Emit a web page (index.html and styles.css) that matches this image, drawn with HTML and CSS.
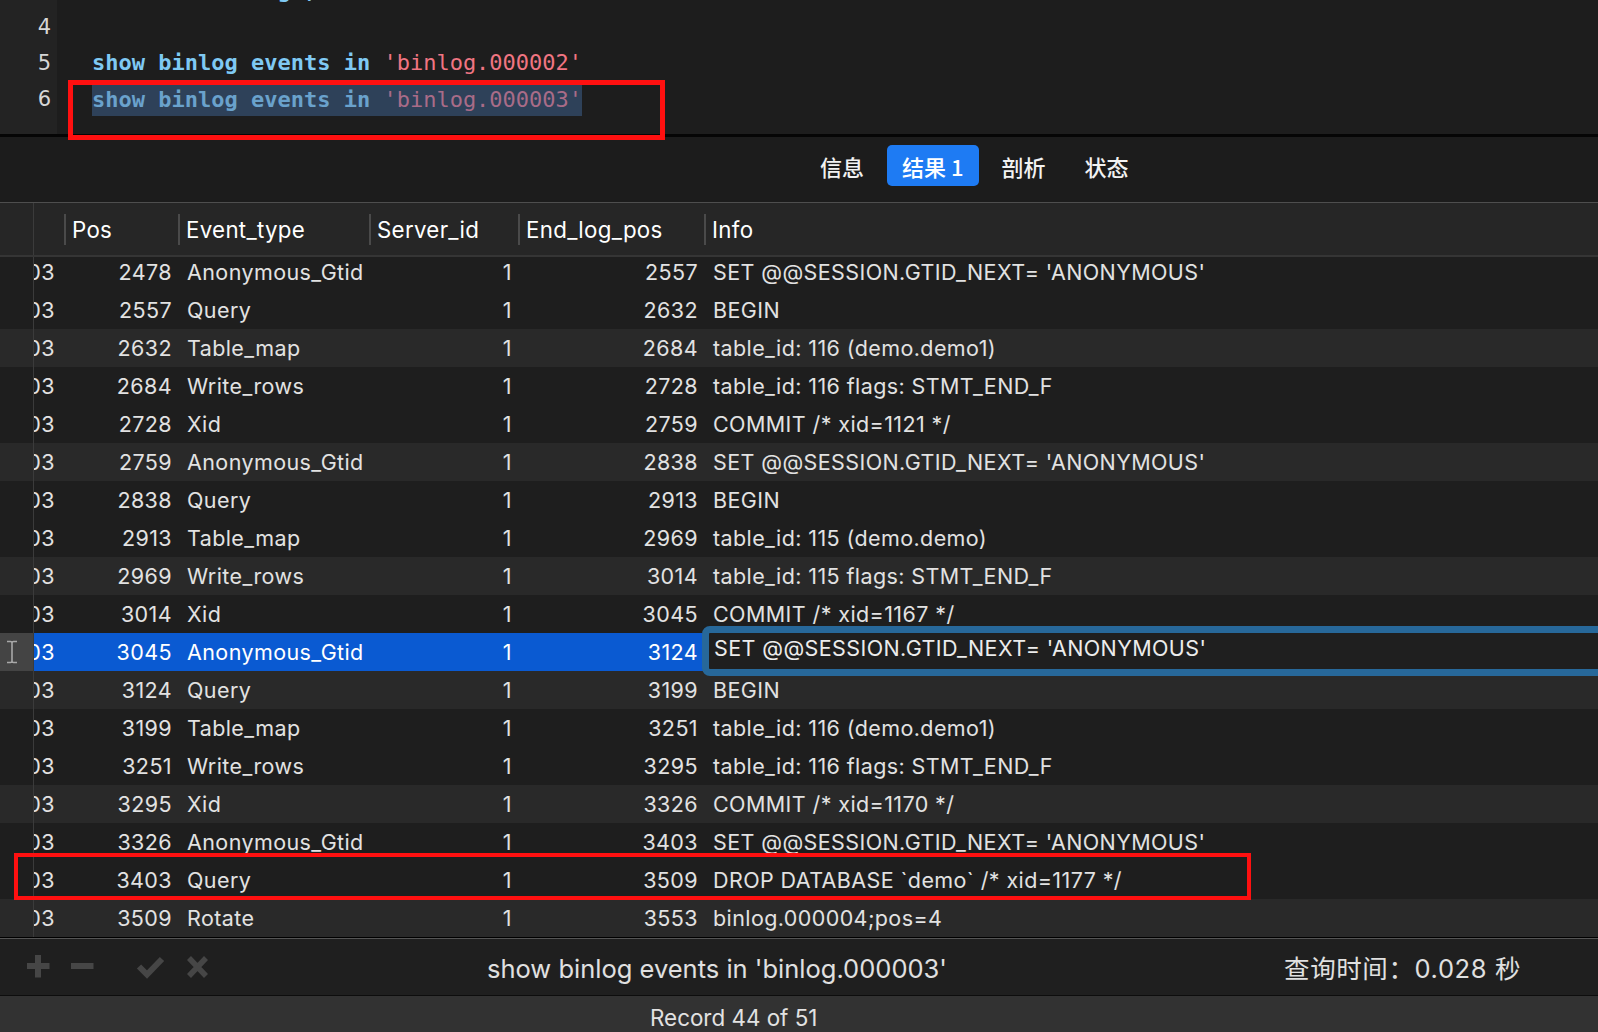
FILE: index.html
```html
<!DOCTYPE html>
<html lang="zh">
<head>
<meta charset="utf-8">
<title>binlog events</title>
<link rel="stylesheet" href="styles.css">
</head>
<body>
<div class="app">
  <div class="editor">
    <div class="gutter">
      <div class="ln">3</div>
      <div class="ln">4</div>
      <div class="ln">5</div>
      <div class="ln">6</div>
    </div>
    <div class="code">
      <div class="ln"><span class="kw">show master logs;</span></div>
      <div class="ln"></div>
      <div class="ln"><span class="kw">show binlog events in</span> <span class="str">'binlog.000002'</span></div>
      <div class="ln"><span class="sel"><span class="kw">show binlog events in</span> <span class="str">'binlog.000003'</span></span></div>
    </div>
  </div>

  <div class="tabs">
    <div class="tab">信息</div>
    <div class="tab active">结果 1</div>
    <div class="tab">剖析</div>
    <div class="tab">状态</div>
  </div>

  <div class="grid">
    <div class="row hdr">
      <div class="c g"></div>
      <div class="c h"></div>
      <div class="c h"><span class="hs">Pos</span></div>
      <div class="c h"><span class="hs">Event_type</span></div>
      <div class="c h"><span class="hs">Server_id</span></div>
      <div class="c h"><span class="hs">End_log_pos</span></div>
      <div class="c h"><span class="hs">Info</span></div>
    </div>

    <div class="rows">
    <div class="row first"><div class="c g"></div><div class="c lg"><span>binlog.000003</span></div><div class="c r">2478</div><div class="c l">Anonymous_Gtid</div><div class="c r">1</div><div class="c r">2557</div><div class="c l">SET @@SESSION.GTID_NEXT= 'ANONYMOUS'</div></div>
    <div class="row"><div class="c g"></div><div class="c lg"><span>binlog.000003</span></div><div class="c r">2557</div><div class="c l">Query</div><div class="c r">1</div><div class="c r">2632</div><div class="c l">BEGIN</div></div>
    <div class="row alt"><div class="c g"></div><div class="c lg"><span>binlog.000003</span></div><div class="c r">2632</div><div class="c l">Table_map</div><div class="c r">1</div><div class="c r">2684</div><div class="c l">table_id: 116 (demo.demo1)</div></div>
    <div class="row"><div class="c g"></div><div class="c lg"><span>binlog.000003</span></div><div class="c r">2684</div><div class="c l">Write_rows</div><div class="c r">1</div><div class="c r">2728</div><div class="c l">table_id: 116 flags: STMT_END_F</div></div>
    <div class="row"><div class="c g"></div><div class="c lg"><span>binlog.000003</span></div><div class="c r">2728</div><div class="c l">Xid</div><div class="c r">1</div><div class="c r">2759</div><div class="c l">COMMIT /* xid=1121 */</div></div>
    <div class="row alt"><div class="c g"></div><div class="c lg"><span>binlog.000003</span></div><div class="c r">2759</div><div class="c l">Anonymous_Gtid</div><div class="c r">1</div><div class="c r">2838</div><div class="c l">SET @@SESSION.GTID_NEXT= 'ANONYMOUS'</div></div>
    <div class="row"><div class="c g"></div><div class="c lg"><span>binlog.000003</span></div><div class="c r">2838</div><div class="c l">Query</div><div class="c r">1</div><div class="c r">2913</div><div class="c l">BEGIN</div></div>
    <div class="row"><div class="c g"></div><div class="c lg"><span>binlog.000003</span></div><div class="c r">2913</div><div class="c l">Table_map</div><div class="c r">1</div><div class="c r">2969</div><div class="c l">table_id: 115 (demo.demo)</div></div>
    <div class="row alt"><div class="c g"></div><div class="c lg"><span>binlog.000003</span></div><div class="c r">2969</div><div class="c l">Write_rows</div><div class="c r">1</div><div class="c r">3014</div><div class="c l">table_id: 115 flags: STMT_END_F</div></div>
    <div class="row"><div class="c g"></div><div class="c lg"><span>binlog.000003</span></div><div class="c r">3014</div><div class="c l">Xid</div><div class="c r">1</div><div class="c r">3045</div><div class="c l">COMMIT /* xid=1167 */</div></div>
    <div class="row selected"><div class="c g"><svg class="ibeam" width="12" height="24" viewBox="0 0 12 24"><path d="M1 1.5h3.5c.8 0 1.5.6 1.5 1.4 0-.8.7-1.4 1.5-1.4H11M1 22.5h3.5c.8 0 1.5-.6 1.5-1.4 0 .8.7 1.4 1.5 1.4H11M6 3v18" fill="none" stroke="#a8a8a8" stroke-width="1.6"/></svg></div><div class="c lg"><span>binlog.000003</span></div><div class="c r">3045</div><div class="c l">Anonymous_Gtid</div><div class="c r">1</div><div class="c r">3124</div><div class="c l info-edit"><div class="editbox">SET @@SESSION.GTID_NEXT= 'ANONYMOUS'</div></div></div>
    <div class="row alt"><div class="c g"></div><div class="c lg"><span>binlog.000003</span></div><div class="c r">3124</div><div class="c l">Query</div><div class="c r">1</div><div class="c r">3199</div><div class="c l">BEGIN</div></div>
    <div class="row"><div class="c g"></div><div class="c lg"><span>binlog.000003</span></div><div class="c r">3199</div><div class="c l">Table_map</div><div class="c r">1</div><div class="c r">3251</div><div class="c l">table_id: 116 (demo.demo1)</div></div>
    <div class="row"><div class="c g"></div><div class="c lg"><span>binlog.000003</span></div><div class="c r">3251</div><div class="c l">Write_rows</div><div class="c r">1</div><div class="c r">3295</div><div class="c l">table_id: 116 flags: STMT_END_F</div></div>
    <div class="row alt"><div class="c g"></div><div class="c lg"><span>binlog.000003</span></div><div class="c r">3295</div><div class="c l">Xid</div><div class="c r">1</div><div class="c r">3326</div><div class="c l">COMMIT /* xid=1170 */</div></div>
    <div class="row"><div class="c g"></div><div class="c lg"><span>binlog.000003</span></div><div class="c r">3326</div><div class="c l">Anonymous_Gtid</div><div class="c r">1</div><div class="c r">3403</div><div class="c l">SET @@SESSION.GTID_NEXT= 'ANONYMOUS'</div></div>
    <div class="row"><div class="c g"></div><div class="c lg"><span>binlog.000003</span></div><div class="c r">3403</div><div class="c l">Query</div><div class="c r">1</div><div class="c r">3509</div><div class="c l">DROP DATABASE `demo` /* xid=1177 */</div></div>
    <div class="row alt"><div class="c g"></div><div class="c lg"><span>binlog.000003</span></div><div class="c r">3509</div><div class="c l">Rotate</div><div class="c r">1</div><div class="c r">3553</div><div class="c l">binlog.000004;pos=4</div></div>
    </div>
  </div>

  <div class="toolbar">
    <div class="tools">
      <svg width="240" height="36" viewBox="0 0 240 36">
        <g fill="#464646">
          <rect x="27" y="15" width="22.5" height="6"/>
          <rect x="35" y="7" width="6" height="22.5"/>
          <rect x="71" y="15" width="22.5" height="6"/>
        </g>
        <g fill="none" stroke="#464646" stroke-width="6">
          <path d="M139 18.5l8 8 15-15.5"/>
          <path d="M189 10l17 18M206 10l-17 18" stroke-width="5.5"/>
        </g>
      </svg>
    </div>
    <div class="sqltext">show binlog events in 'binlog.000003'</div>
    <div class="spacer"></div>
    <div class="qtime">查询时间：0.028 秒</div>
  </div>

  <div class="status">Record 44 of 51</div>

  <div class="mark mark1"></div>
  <div class="mark mark2"></div>
</div>
</body>
</html>
```

FILE: styles.css
```css
* { box-sizing: border-box; }
html, body { margin: 0; padding: 0; }
body {
  width: 1598px;
  height: 1032px;
  overflow: hidden;
  background: #1e1e1e;
  font-family: Inter, "Noto Sans CJK SC", sans-serif;
  color: #e2e2e2;
}
.app { position: relative; width: 1598px; }

/* editor */
.editor {
  height: 137px;
  border-bottom: 3px solid #050505;
  display: flex;
  overflow: hidden;
  background: #1d1d1d;
}
.gutter {
  width: 57px;
  flex: none;
  background: #232323;
  text-align: right;
  padding-right: 6px;
  margin-top: -27px;
  font-family: "DejaVu Sans", sans-serif;
  font-size: 21px;
  color: #d6d6d6;
}
.code {
  margin-top: -27px;
  padding-left: 35px;
  font-family: "DejaVu Sans Mono", monospace;
  font-size: 22px;
}
.ln { height: 36px; line-height: 36px; white-space: pre; }
.kw { color: #7fc9f3; font-weight: bold; }
.str { color: #f07582; }
.sel { display: inline-block; background: #2e4159; line-height: 33px; vertical-align: top; margin-top: 2px; }
.sel .kw { color: #6aa2cc; }
.sel .str { color: #a96c88; }

/* tabs */
.tabs {
  height: 66px;
  border-bottom: 1px solid #4e4e4e;
  background: #1c1c1c;
  display: flex;
  align-items: flex-start;
  gap: 7px;
  padding: 8px 0 0 804px;
}
.tab {
  height: 41px;
  padding: 0 16px;
  display: flex;
  align-items: center;
  font-family: "Noto Sans CJK SC", sans-serif;
  font-size: 22px;
  font-weight: 500;
  color: #f2f2f2;
  border-radius: 5px;
}
.tab.active { background: #1e7bf3; color: #fff; padding: 0 15px; }

/* grid */
.row {
  display: grid;
  grid-template-columns: 34px 30px 114px 191px 149px 186px 1fr;
  height: 38px;
  background: #1e1e1e;
  font-size: 21.5px;
  letter-spacing: 0.4px;
}
.row.alt { background: #292929; }
.row.hdr {
  height: 54px;
  background: #262626;
  border-bottom: 2px solid #353535;
  font-size: 22.3px;
  letter-spacing: 0.3px;
}
.rows { height: 680px; overflow: hidden; }
.row.first { margin-top: -4px; }
.c {
  display: flex;
  align-items: center;
  white-space: nowrap;
  overflow: hidden;
  min-width: 0;
}
.g { border-right: 1px solid #3b3b3b; justify-content: flex-start; padding-left: 6px; }
.h { color: #fff; }
.hs {
  display: flex;
  align-items: center;
  height: 31px;
  border-left: 2px solid #4a4a4a;
  padding-left: 6px;
}
.lg { justify-content: flex-end; padding-right: 9px; }
.lg span { flex: none; }
.r { justify-content: flex-end; padding-right: 6px; }
.l { padding-left: 9px; }

.row.selected { background: #0a5ad2; color: #fff; }
.row.selected .g { background: #444; }
.info-edit { overflow: visible; position: relative; }
.editbox {
  position: absolute;
  left: -2px;
  top: -7px;
  right: -40px;
  height: 50px;
  border: 7px solid #27689a;
  border-radius: 8px;
  background: #1f1f1f;
  padding-left: 5px;
  line-height: 30px;
  color: #ececec;
  white-space: nowrap;
}

/* toolbar */
.toolbar {
  height: 58px;
  border-top: 1px solid #000;
  box-shadow: inset 0 1px 0 #555;
  background: #1f1f1f;
  display: flex;
  align-items: center;
  padding: 3px 77px 0 0;
  font-size: 25.5px;
  color: #e0e0e0;
}
.tools { width: 487px; flex: none; display: flex; margin-top: -4px; }
.tools svg { display: block; }
.spacer { flex: 1; }
.qtime { font-family: Inter, "Noto Sans CJK SC", sans-serif; letter-spacing: 0.6px; margin-top: -3px; }

.status {
  height: 45px;
  border-top: 1px solid #0d0d0d;
  background: #323232;
  padding: 7px 0 0 650px;
  font-size: 22.4px;
  line-height: 30px;
  color: #e2e2e2;
}

/* annotation boxes */
.mark { position: absolute; border: 5px solid #ff1010; }
.mark1 { left: 68px; top: 80px; width: 597px; height: 60px; }
.mark2 { left: 14px; top: 853px; width: 1237px; height: 47px; border-width: 4px; }
```
